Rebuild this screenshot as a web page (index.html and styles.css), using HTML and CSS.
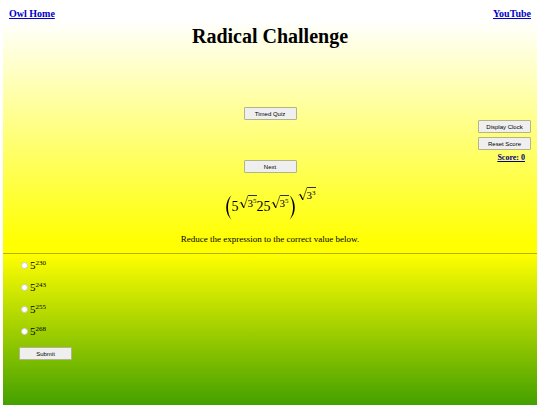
FILE: index.html
```html
<!DOCTYPE html>
<html lang="en">
<head>
  <meta charset="UTF-8" />
  <meta name="viewport" content="width=device-width, initial-scale=1.0"/>
  <title>Radical Challenge</title>
  <link rel="stylesheet" href="styles.css">
</head>
<body>

  <div class="question">
    <nav>
      <a href="#home">Owl Home</a>
      <a href="#youtube">YouTube</a>
    </nav>
    <h1>Radical Challenge</h1>

    <div class="controls">
      <div class="center-buttons">
        <button type="button">Timed Quiz</button>
        <button type="button">Next</button>
      </div>
      <div class="side-buttons">
        <button type="button">Display Clock</button>
        <button type="button">Reset Score</button>
        <span class="score">Score: 0</span>
      </div>
    </div>

    <div class="expression">
      <svg class="paren" viewBox="0 0 7 25"><path d="M6.400 .3C-.5 6.500-.5 18.500 6.400 24.700C1.800 18 1.800 7 6.400 .3Z"/></svg>
      <span class="base">5</span>
      <span class="radical">
        <svg class="root" viewBox="0 0 9 14"><path d="M.6 8.400L2.200 7.200L4.800 13L9 .5"/><path class="thick" d="M2.200 7.400L4.700 12.600"/></svg>
        <span class="radicand">3<sup>5</sup></span>
      </span>
      <span class="base">25</span>
      <span class="radical">
        <svg class="root" viewBox="0 0 9 14"><path d="M.6 8.400L2.200 7.200L4.800 13L9 .5"/><path class="thick" d="M2.200 7.400L4.700 12.600"/></svg>
        <span class="radicand">3<sup>5</sup></span>
      </span>
      <svg class="paren" viewBox="0 0 7 25"><path d="M.6 .3C7.500 6.500 7.500 18.500 .6 24.700C5.200 18 5.200 7 .6 .3Z"/></svg>
      <span class="radical outer">
        <svg class="root" viewBox="0 0 9 14"><path d="M.6 8.400L2.200 7.200L4.800 13L9 .5"/><path class="thick" d="M2.200 7.400L4.700 12.600"/></svg>
        <span class="radicand">3<sup>3</sup></span>
      </span>
    </div>

    <p>Reduce the expression to the correct value below.</p>
  </div>

  <form class="answers">
    <div class="option">
      <input type="radio" name="answer" id="a1" />
      <label for="a1">5<sup>230</sup></label>
    </div>
    <div class="option">
      <input type="radio" name="answer" id="a2" />
      <label for="a2">5<sup>243</sup></label>
    </div>
    <div class="option">
      <input type="radio" name="answer" id="a3" />
      <label for="a3">5<sup>255</sup></label>
    </div>
    <div class="option">
      <input type="radio" name="answer" id="a4" />
      <label for="a4">5<sup>268</sup></label>
    </div>
    <button type="button">Submit</button>
  </form>

</body>
</html>
```

FILE: styles.css
```css
* {
  box-sizing: border-box;
}

body {
  font-family: "Liberation Serif", serif;
  color: #000;
  background: #fff;
  display: flex;
  flex-direction: column;
  min-height: 100vh;
  margin: 0;
  padding: 0 3px;
}

.question {
  padding: 8px 6px;
  background: linear-gradient(#fff 8%, #ff0 96%);
  border-bottom: 1px solid #b4b400;
}

nav {
  display: flex;
  justify-content: space-between;
  font-size: 10px;
  line-height: 12px;
  font-weight: bold;
}

a {
  color: #0000c8;
}

h1 {
  margin: 4px 0 59px;
  font-size: 20px;
  line-height: 24px;
  text-align: center;
}

button {
  width: 53px;
  height: 13px;
  padding: 0;
  border: 1px solid #b4b48c;
  border-radius: 1px;
  background: #efefef;
  color: #000;
  font-family: "Liberation Sans", sans-serif;
  font-size: 6px;
  line-height: 10px;
  cursor: pointer;
}

.controls {
  display: grid;
  grid-template-columns: 1fr auto 1fr;
}

.center-buttons {
  grid-column: 2;
  display: flex;
  flex-direction: column;
  gap: 40px;
}

.side-buttons {
  display: flex;
  flex-direction: column;
  align-items: flex-end;
  gap: 4px;
  padding-top: 13px;
}

.score {
  padding-right: 6px;
  font-size: 8px;
  line-height: 8px;
  font-weight: bold;
  color: #000080;
  text-decoration: underline;
}

.expression {
  display: flex;
  justify-content: center;
  align-items: flex-start;
  margin-top: 14px;
}

.paren {
  width: 7px;
  height: 25px;
  margin-top: 8px;
}

.base {
  margin-top: 12px;
  font-size: 14px;
  line-height: 16px;
}

.radical {
  display: flex;
  margin-top: 8px;
}

.radical.outer {
  margin-top: 0;
  padding-left: 2px;
}

.root {
  width: 9px;
  height: 14px;
  fill: none;
  stroke: #000;
  stroke-width: 0.6;
}

.root .thick {
  stroke-width: 1.1;
}

.radicand {
  border-top: 1px solid #333;
  font-size: 11px;
  line-height: 14px;
}

sup {
  font-size: 7px;
  line-height: 0;
  vertical-align: 4px;
}

p {
  margin: 13px 0 0;
  font-size: 9px;
  line-height: 12px;
  text-align: center;
}

.answers {
  flex: 1;
  padding: 0 16px;
  background: linear-gradient(#ff0, #44a000);
}

.option {
  display: flex;
  align-items: center;
  height: 22px;
  font-size: 11px;
  line-height: 12px;
}

.option input {
  appearance: none;
  width: 7px;
  height: 7px;
  margin: 1px 2px 0;
  border: 1px solid #ccc;
  border-radius: 50%;
  background: #fff;
}

.option input:checked {
  border: 2px solid #0075ff;
}

.answers button {
  display: block;
  margin-top: 5px;
}
```
